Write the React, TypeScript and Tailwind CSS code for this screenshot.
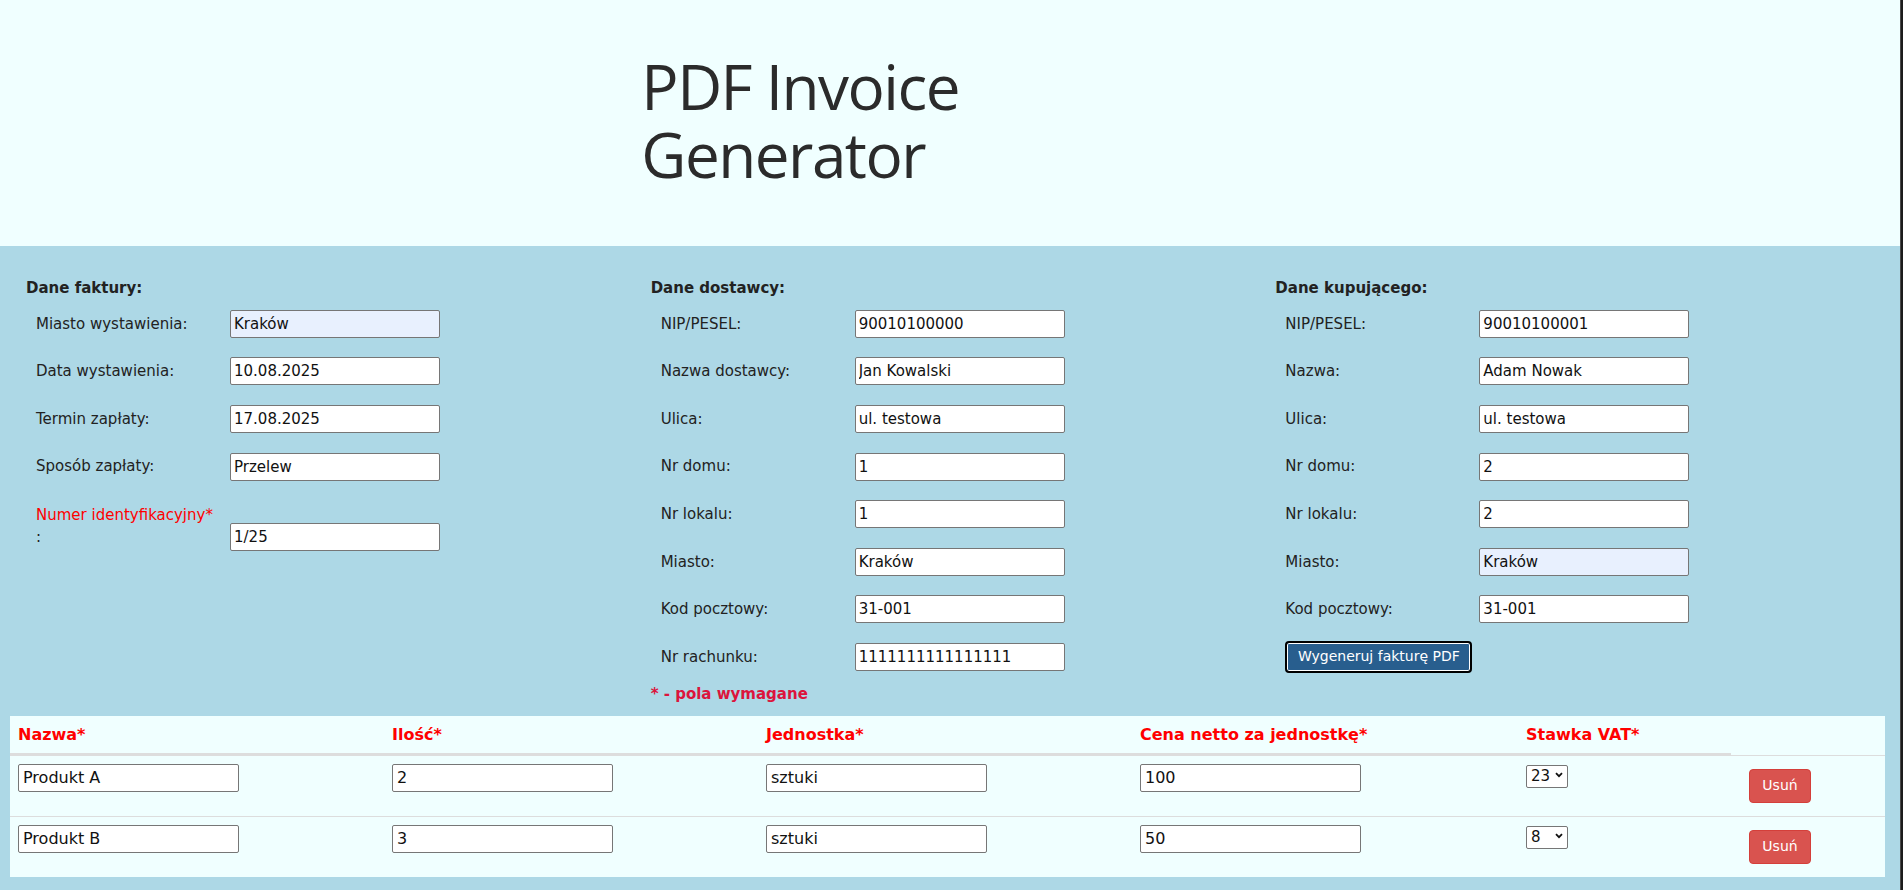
import React from "react";

const font = "font-['DejaVu_Sans',Verdana,sans-serif]";

interface Field {
  label: string;
  value: string;
  autofill?: boolean;
}

const invoiceFields: Field[] = [
  { label: "Miasto wystawienia:", value: "Kraków", autofill: true },
  { label: "Data wystawienia:", value: "10.08.2025" },
  { label: "Termin zapłaty:", value: "17.08.2025" },
  { label: "Sposób zapłaty:", value: "Przelew" },
];

const sellerFields: Field[] = [
  { label: "NIP/PESEL:", value: "90010100000" },
  { label: "Nazwa dostawcy:", value: "Jan Kowalski" },
  { label: "Ulica:", value: "ul. testowa" },
  { label: "Nr domu:", value: "1" },
  { label: "Nr lokalu:", value: "1" },
  { label: "Miasto:", value: "Kraków" },
  { label: "Kod pocztowy:", value: "31-001" },
  { label: "Nr rachunku:", value: "1111111111111111" },
];

const buyerFields: Field[] = [
  { label: "NIP/PESEL:", value: "90010100001" },
  { label: "Nazwa:", value: "Adam Nowak" },
  { label: "Ulica:", value: "ul. testowa" },
  { label: "Nr domu:", value: "2" },
  { label: "Nr lokalu:", value: "2" },
  { label: "Miasto:", value: "Kraków", autofill: true },
  { label: "Kod pocztowy:", value: "31-001" },
];

const products = [
  { name: "Produkt A", qty: "2", unit: "sztuki", price: "100", vat: "23" },
  { name: "Produkt B", qty: "3", unit: "sztuki", price: "50", vat: "8" },
];

const TextInput: React.FC<{ value: string; autofill?: boolean }> = ({ value, autofill }) => (
  <input
    type="text"
    defaultValue={value}
    className={`w-[210px] h-[28px] px-[3px] border border-[#767676] rounded-[2px] text-[15px] text-[#111] outline-none ${
      autofill ? "bg-[#e8f0fe]" : "bg-white"
    }`}
  />
);

const FieldRow: React.FC<{ field: Field }> = ({ field }) => (
  <div className="flex items-center h-[47.6px]">
    <label className="w-[204px] pl-[10px] text-[15px] text-[#222]">{field.label}</label>
    <TextInput value={field.value} autofill={field.autofill} />
  </div>
);

const SelectVat: React.FC<{ value: string }> = ({ value }) => (
  <div className="relative w-[42px] h-[23px]">
    <select
      defaultValue={value}
      className="appearance-none w-[42px] h-[23px] pl-[4px] border border-[#767676] rounded-[2px] bg-white text-[15px] text-[#111] leading-[21px]"
    >
      <option value="23">23</option>
      <option value="8">8</option>
      <option value="5">5</option>
      <option value="0">0</option>
    </select>
    <svg
      className="absolute right-[5px] top-[8px] pointer-events-none"
      width="8"
      height="6"
      viewBox="0 0 8 6"
    >
      <path d="M1 1.2 L4 4.2 L7 1.2" fill="none" stroke="#111" strokeWidth="1.8" />
    </svg>
  </div>
);

const App: React.FC = () => {
  return (
    <div className={`flex w-[1903px] min-h-[890px] ${font}`}>
      <main className="w-[1900px] flex flex-col">
        {/* Header */}
        <header className="grid grid-cols-3 h-[246px] bg-[#f0ffff]">
          <div />
          <h1 className="pl-[8px] pt-[52px] font-['Open_Sans',sans-serif] text-[62px] leading-[68px] tracking-[-1.5px] text-[#2b2b2b] font-normal">
            PDF Invoice
            <br />
            Generator
          </h1>
          <div />
        </header>

        {/* Form */}
        <section className="flex-1 bg-[#add8e6] pb-[13px]">
          <div className="flex pt-[30px] pl-[26px]">
            <div className="w-[625px]">
              <h3 className="h-[24px] leading-[24px] text-[15px] font-bold text-[#222]">Dane faktury:</h3>
              {invoiceFields.map((f) => (
                <FieldRow key={f.label} field={f} />
              ))}
              <div className="flex items-start">
                <label className="w-[204px] pl-[10px] mt-[14px] text-[15px] leading-[22px] text-[#222]">
                  <span className="block text-[#ff0000]">Numer identyfikacyjny*</span>
                  <span className="block">:</span>
                </label>
                <div className="mt-[33px]">
                  <TextInput value="1/25" />
                </div>
              </div>
            </div>

            <div className="w-[625px]">
              <h3 className="h-[24px] leading-[24px] text-[15px] font-bold text-[#222]">Dane dostawcy:</h3>
              {sellerFields.map((f) => (
                <FieldRow key={f.label} field={f} />
              ))}
              <p className="mt-[3px] leading-[20px] text-[15px] font-bold text-[#dc143c]">* - pola wymagane</p>
            </div>

            <div className="w-[625px]">
              <h3 className="h-[24px] leading-[24px] text-[15px] font-bold text-[#222]">Dane kupującego:</h3>
              {buyerFields.map((f) => (
                <FieldRow key={f.label} field={f} />
              ))}
              <div className="flex items-center h-[47.6px] pl-[10px]">
                <button className="w-[187px] h-[32px] rounded-[4px] border-2 border-black bg-[#285e8e] shadow-[inset_0_0_0_1px_white] text-white text-[14px]">
                  Wygeneruj fakturę PDF
                </button>
              </div>
            </div>
          </div>

          {/* Products */}
          <table className="ml-[10px] mt-[12px] w-[1875px] table-fixed border-separate border-spacing-0 bg-[#f0ffff]">
            <thead>
              <tr>
                <th className="w-[374px] px-[8px] py-[9px] leading-[19px] text-left text-[16px] font-bold text-[#ff0000] border-b-2 border-[#dddddd]">Nazwa*</th>
                <th className="w-[374px] px-[8px] py-[9px] leading-[19px] text-left text-[16px] font-bold text-[#ff0000] border-b-2 border-[#dddddd]">Ilość*</th>
                <th className="w-[374px] px-[8px] py-[9px] leading-[19px] text-left text-[16px] font-bold text-[#ff0000] border-b-2 border-[#dddddd]">Jednostka*</th>
                <th className="w-[386px] px-[8px] py-[9px] leading-[19px] text-left text-[16px] font-bold text-[#ff0000] border-b-2 border-[#dddddd]">Cena netto za jednostkę*</th>
                <th className="w-[213px] px-[8px] py-[9px] leading-[19px] text-left text-[16px] font-bold text-[#ff0000] border-b-2 border-[#dddddd]">Stawka VAT*</th>
                <th className="w-[154px]" />
              </tr>
            </thead>
            <tbody>
              {products.map((p) => (
                <tr key={p.name}>
                  {[p.name, p.qty, p.unit, p.price].map((v, i) => (
                    <td key={i} className="align-top p-[8px] border-t border-[#dddddd]">
                      <input
                        type="text"
                        defaultValue={v}
                        className="w-[221px] h-[28px] px-[4px] border border-[#767676] rounded-[2px] bg-white text-[16px] text-[#111] outline-none"
                      />
                    </td>
                  ))}
                  <td className="align-top p-[8px] border-t border-[#dddddd]">
                    <SelectVat value={p.vat} />
                  </td>
                  <td className="align-top p-[8px] border-t border-[#dddddd]">
                    <button className="ml-[10px] my-[5px] w-[62px] h-[34px] rounded-[4px] border border-[#d43f3a] bg-[#d9534f] text-white text-[14px]">
                      Usuń
                    </button>
                  </td>
                </tr>
              ))}
            </tbody>
          </table>
        </section>
      </main>
      <div className="w-[3px] bg-[#1c1c1c] border-l border-[#4a4a4a]" />
    </div>
  );
};

export default App;
